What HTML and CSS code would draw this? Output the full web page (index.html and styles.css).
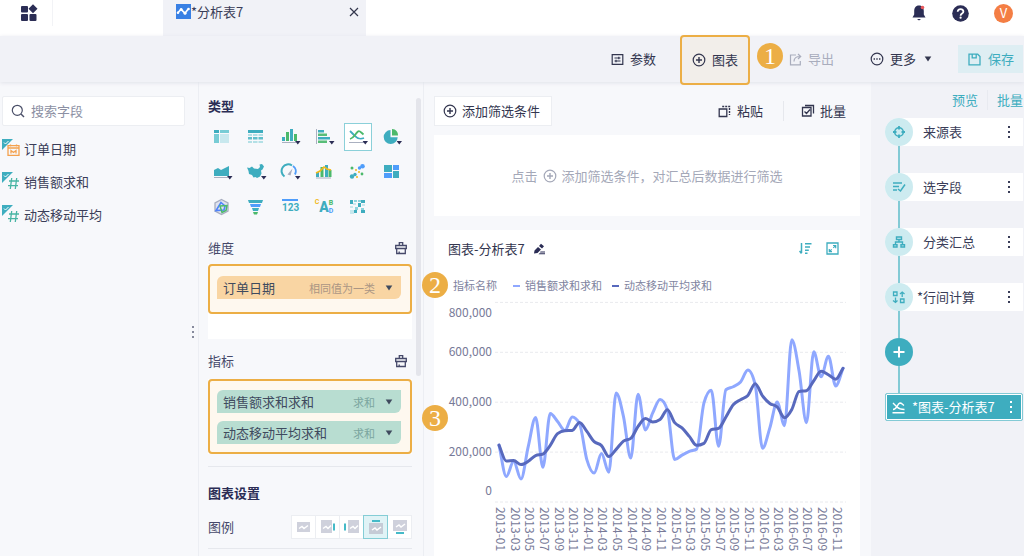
FILE: index.html
```html
<!DOCTYPE html>
<html lang="zh-CN">
<head>
<meta charset="utf-8">
<title>分析表7</title>
<link rel="stylesheet" href="styles.css">
</head>
<body>
<svg class="defs" aria-hidden="true">
  <symbol id="plus" viewBox="0 0 14 14"><circle cx="7" cy="7" r="5.8" fill="none" stroke="currentColor" stroke-width="1.2"/><path d="M7 4v6M4 7h6" stroke="currentColor" stroke-width="1.4"/></symbol>
  <symbol id="brush" viewBox="0 0 14 14"><path d="M5.300 4.500V1.700h3.400v2.800M1.700 7.500v-3h10.600v3M1 7.500h12M2.700 8v4.500h8.600V8M5.200 12.500V10.500" fill="none" stroke="currentColor" stroke-width="1.3"/></symbol>
  <symbol id="dots" viewBox="0 0 4 16"><path d="M1 2h2v2H1zM1 7h2v2H1zM1 12h2v2H1z" fill="currentColor"/></symbol>
  <symbol id="caret" viewBox="0 0 8 6"><path d="M.7.500h6.600L4 5.500z" fill="currentColor"/></symbol>
  <symbol id="hash" viewBox="0 0 18 18"><path d="M0 0h11L0 11z" fill="#3eadbf"/><path d="M2 3.500l1.500 1.500L6.500 2" fill="none" stroke="#fff"/><path d="M9.700 6L8.300 17M14.700 6l-1.400 11M7 9h10M6 13.700h10" stroke="#48b5a4" stroke-width="1.300" fill="none"/></symbol>
  <symbol id="tri" viewBox="0 0 6 4"><path d="M0 0h5.500L2.800 3.500z" fill="#2b2d55"/></symbol>
</svg>

<header class="topbar">
  <button class="apps" aria-label="应用"><svg width="18" height="18" viewBox="0 0 18 18" fill="#2b2d55"><rect x="1" y="2" width="7" height="6.500" rx="1"/><path d="M13 .3l4.500 4.500L13 9.300 8.500 4.800z"/><rect x="1" y="10" width="7" height="7" rx="1"/><rect x="9.500" y="10" width="7" height="7" rx="1"/></svg></button>
  <div class="tab">
    <svg width="15" height="15" viewBox="0 0 15 15"><path fill="#3880e4" d="M0 0h15v15H0z"/><path d="M2 8.500L5 5.500l4 3.700 3-4" fill="none" stroke="#fff" stroke-width="1.700"/><g fill="#fff"><circle cx="2" cy="8.700" r="1.300"/><circle cx="5.200" cy="5.500" r="1.500"/><circle cx="9" cy="9.200" r="1.500"/><circle cx="12.500" cy="5" r="1.300"/></g></svg>
    <span>*分析表7</span>
    <button class="close" aria-label="关闭"><svg width="10" height="10" viewBox="0 0 10 10"><path d="M1 1l8 8M9 1L1 9" stroke="#33374d" stroke-width="1.200"/></svg></button>
  </div>
  <nav class="account">
    <button aria-label="通知"><svg width="16" height="18" viewBox="0 0 16 18"><path d="M8 1.500c-3.500 0-4.800 2.500-4.800 5.500v3.500L1.500 13.500h13l-1.700-3V7c0-3-1.300-5.500-4.800-5.500zM6 15h4l-2 1.500z" fill="#2b2d55"/><circle cx="11.500" cy="3.500" r="1.800" fill="#e8595c"/></svg></button>
    <button aria-label="帮助"><svg width="17" height="17" viewBox="0 0 17 17"><circle cx="8.500" cy="8.500" r="8.300" fill="#2b2d55"/><path d="M5.700 6.700c0-3.600 5.700-3.400 5.700 0 0 1.900-2.800 1.900-2.800 4" fill="none" stroke="#fff" stroke-width="1.800"/><circle cx="8.600" cy="12.700" r="1.100" fill="#fff"/></svg></button>
    <button class="avatar">V</button>
  </nav>
</header>

<div class="toolbar">
  <button class="tool"><svg width="13" height="13" viewBox="0 0 13 13"><path d="M1.200 1.700h10.600v9.600H1.200zM3.500 5h6M3.500 8h6M7.800 3.700v2.600M5 6.700v2.600" fill="none" stroke="currentColor" stroke-width="1.200"/></svg>参数</button>
  <button class="tool tool-chart"><svg width="14" height="14"><use href="#plus"/></svg>图表<span class="step step-1">1</span></button>
  <button class="tool tool-export" disabled><svg width="13" height="13" viewBox="0 0 13 13"><path d="M7 2H1.500v9.800h9.800V8M5 8.500C5 5 7 3.500 11 3.500M9 1l2.700 2.500L9 6" fill="none" stroke="currentColor" stroke-width="1.200"/></svg>导出</button>
  <button class="tool tool-more"><svg width="14" height="14" viewBox="0 0 14 14"><circle cx="7" cy="7" r="5.800" fill="none" stroke="currentColor" stroke-width="1.200"/><path d="M3.600 6.300H5v1.400H3.600zM6.300 6.300h1.400v1.400H6.300zM9 6.300h1.400v1.400H9z" fill="currentColor"/></svg>更多<svg width="8" height="6"><use href="#caret"/></svg></button>
  <button class="tool save"><svg width="13" height="13" viewBox="0 0 13 13"><path d="M1 1.200h8.700L12 3.500v8.300H1zM4.200 1.500v3.300h4V1.500" fill="none" stroke="currentColor" stroke-width="1.300"/></svg>保存</button>
</div>

<main class="workspace">
  <aside class="fields">
    <label class="search"><svg width="14" height="14" viewBox="0 0 14 14"><circle cx="6.300" cy="6.300" r="5" fill="none" stroke="#4a4f68" stroke-width="1.200"/><path d="M10 10l3 3" stroke="#4a4f68" stroke-width="1.400"/></svg><input type="text" placeholder="搜索字段" aria-label="搜索字段"></label>
    <ul class="field-list">
      <li><svg width="18" height="18" viewBox="0 0 18 18"><path d="M0 0h11L0 11z" fill="#3eadbf"/><path d="M2 3.500l1.500 1.500L6.500 2" fill="none" stroke="#fff"/><path d="M6 6.700h11v9.600H6zM6 9h11M8.500 5.500v2M14.500 5.500v2M9 14.500v-3l2.500 2 2.500-2v3" fill="none" stroke="#f4a14e" stroke-width="1.300"/></svg>订单日期</li>
      <li><svg width="18" height="18"><use href="#hash"/></svg>销售额求和</li>
      <li><svg width="18" height="18"><use href="#hash"/></svg>动态移动平均</li>
    </ul>
    <div class="handle"><svg width="4" height="16"><use href="#dots"/></svg></div>
  </aside>

  <section class="config">
    <h2>类型</h2>
    <div class="types">
      <button aria-label="分组表"><svg viewBox="0 0 22 18"><path d="M3 2h5v3H3z" fill="#3eadbf"/><path d="M9 2h9v3H9zM3 6h5v9H3z" fill="#78ccd5"/><path d="M9 6h9v9H9z" fill="#c8e8ee"/></svg></button>
      <button aria-label="明细表"><svg viewBox="0 0 22 18"><path d="M3 2h15v3H3z" fill="#3eadbf"/><path d="M3 6h15v2H3zM3 13h15v2H3z" fill="#b3e0e6"/><path d="M3 9h15v2.500H3z" fill="#62bfcb"/><path d="M7.500 5v10M13 5v10" stroke="#f7f8fb"/></svg></button>
      <button aria-label="柱形图"><svg viewBox="0 0 22 18"><path d="M3 9h3v4H3zM11 1h3v12h-3z" fill="#3eadbf"/><path d="M7 4h3v9H7zM15 6h3v7h-3z" fill="#4cb96b"/><path d="M3 14.500h14" stroke="#aab0c0"/><use href="#tri" x="16" y="13" width="6" height="4"/></svg></button>
      <button aria-label="条形图"><svg viewBox="0 0 22 18"><path d="M3.500 1v15" stroke="#aab0c0"/><path d="M5 2h6v2.500H5zM5 9h12v2.500H5z" fill="#3eadbf"/><path d="M5 5.500h9V8H5zM5 12.500h9V15H5z" fill="#58bd78"/><use href="#tri" x="16" y="13" width="6" height="4"/></svg></button>
      <button class="selected" aria-label="线形图"><svg viewBox="0 0 22 18"><path d="M3 3l5 5c3 3 5 3.500 9 2" fill="none" stroke="#3eadbf" stroke-width="1.800"/><path d="M3 11c4-1 5-5 8-7.500 1.500-1.200 2 0 5.500 3" fill="none" stroke="#4cb96b" stroke-width="1.800"/><path d="M2 14.500h15" stroke="#aab0c0"/><use href="#tri" x="15.500" y="13" width="6" height="4"/></svg></button>
      <button aria-label="饼图"><svg viewBox="0 0 22 18"><path d="M9.500 2v7.200h7.200A7 7 0 1 1 9.500 2z" fill="#3eadbf"/><path d="M11 1c4 0 6 3 6 6.500h-6z" fill="#4cb96b"/><use href="#tri" x="15.500" y="13" width="6" height="4"/></svg></button>
      <button aria-label="面积图"><svg viewBox="0 0 22 18"><path d="M3 7l4-2 3 2 8-4v10H3z" fill="#3eadbf"/><path d="M3 14.500h14" stroke="#aab0c0"/><use href="#tri" x="16" y="13" width="6" height="4"/></svg></button>
      <button aria-label="地图"><svg viewBox="0 0 22 18"><path d="M2 4.500l2.500.5L7 3.500l2 2 4 .5 2-2-.5-2.500L17 1l2 2.500-1.500 3-1.500 1 .5 3-1.500 3-3 1.500-1.500-1-2 .5L7 12l-3-1-.5-3z" fill="#3eadbf"/><use href="#tri" x="16" y="13" width="6" height="4"/></svg></button>
      <button aria-label="仪表盘"><svg viewBox="0 0 22 18"><path d="M5.500 13.500A6.500 6.500 0 0 1 13 2.500" fill="none" stroke="#3eadbf" stroke-width="2"/><path d="M14 3a6.500 6.500 0 0 1 2 8.500" fill="none" stroke="#4f9dfb" stroke-width="2"/><path d="M8.500 11.500l5-6-2 7z" fill="#a7adbf"/><use href="#tri" x="16" y="13" width="6" height="4"/></svg></button>
      <button aria-label="组合图"><svg viewBox="0 0 22 18"><path d="M3 9h3v5H3zM12 2h3v12h-3z" fill="#3eadbf"/><path d="M7.500 4h3v10h-3zM15.500 7h3v7h-3z" fill="#4cb96b"/><path d="M3 10l4-2 4-4 3 2 4 1" fill="none" stroke="#f1b91c" stroke-width="1.600"/><path d="M3 15h15" stroke="#aab0c0"/></svg></button>
      <button aria-label="散点图"><svg viewBox="0 0 22 18"><g fill="#3eadbf"><circle cx="5" cy="13.500" r="2.200"/><circle cx="8" cy="11.500" r="1.700"/></g><g fill="#4f9dfb"><circle cx="15.500" cy="3.200" r="2.300"/><circle cx="12.500" cy="5" r="1.700"/></g><g fill="#4cb96b"><circle cx="5" cy="5" r="1.500"/><circle cx="15" cy="11" r="1.400"/></g><g fill="#f1b91c"><circle cx="9" cy="7" r="1"/><circle cx="12" cy="9" r="1"/><circle cx="10" cy="14" r="1"/></g></svg></button>
      <button aria-label="矩形树图"><svg viewBox="0 0 22 18"><path d="M3 2h8v7H3zM12 8h6v7h-6z" fill="#3eadbf"/><path d="M12 2h6v5h-6zM3 10h8v5H3z" fill="#4f9dfb"/></svg></button>
      <button aria-label="雷达图"><svg viewBox="0 0 22 18"><path d="M10.500 1.500L17 5v8l-6.500 3.500L4 13V5z" fill="#dfe3ef" stroke="#a7adbf" stroke-width="1.300"/><path d="M10 4.500l4 3.500-1 4-8 .5z" fill="none" stroke="#4f83fb" stroke-width="1.600"/><path d="M9 8l7-.500-1 5-4 2z" fill="none" stroke="#4cb96b" stroke-width="1.500"/></svg></button>
      <button aria-label="漏斗图"><svg viewBox="0 0 22 18"><path d="M3 2h15l-1 3H4z" fill="#3eadbf"/><path d="M5 6h11l-1 3H6z" fill="#4f9dfb"/><path d="M7 10h7l-1 3H8z" fill="#3eadbf"/><path d="M8 14h5l-1 2.500H9z" fill="#4cb96b"/></svg></button>
      <button class="type-number" aria-label="指标卡"><span>123</span></button>
      <button class="type-words" aria-label="词云"><i>C</i><b>A</b><span><em>B</em><u>D</u></span></button>
      <button aria-label="热力图"><svg viewBox="0 0 22 18"><path d="M3 2h3v4H3zM14 2h4v3h-4zM11 5h3v4h-3zM14 12h4v3h-4zM7 12h3v3H7z" fill="#3eadbf"/><path d="M7 2h3v2H7zM11 2h3v2h-3zM8 9h3v3H8zM14 10h3v2h-3z" fill="#8dd3dc"/><path d="M3 12h4v4H3zM6 5h3v2H6zM3 8h3v2H3zM15 6h3v2h-3z" fill="#c8e8ee"/></svg></button>
    </div>

    <div class="row"><h3>维度</h3><button aria-label="清空维度"><svg width="14" height="14"><use href="#brush"/></svg></button></div>
    <div class="well">
      <div class="frame">
        <button class="pill orange"><span>订单日期</span><small>相同值为一类</small><svg width="8" height="6"><use href="#caret"/></svg></button>
      </div>
      <span class="step step-2">2</span>
    </div>
    <div class="row"><h3>指标</h3><button aria-label="清空指标"><svg width="14" height="14"><use href="#brush"/></svg></button></div>
    <div class="well well-metrics">
      <div class="frame">
        <button class="pill"><span>销售额求和求和</span><small>求和</small><svg width="8" height="6"><use href="#caret"/></svg></button>
        <button class="pill"><span>动态移动平均求和</span><small>求和</small><svg width="8" height="6"><use href="#caret"/></svg></button>
      </div>
      <span class="step step-3">3</span>
    </div>
    <div class="settings">
      <h2>图表设置</h2>
      <div class="row legend-row"><h3>图例</h3>
        <div class="segments">
          <button aria-label="无图例"><svg viewBox="0 0 20 18"><path d="M3 4h13v10H3z" fill="#cfd1dc"/><path d="M5 10.500l3-2 2 2 4-3" fill="none" stroke="#fff" stroke-width="1.500"/></svg></button>
          <button aria-label="右侧"><svg viewBox="0 0 20 18"><path d="M3 2h11v13H3z" fill="#cfd1dc"/><path d="M5 10.500l3-2 2 2 3-3" fill="none" stroke="#fff" stroke-width="1.500"/><path d="M16 5.500v7" stroke="#45bac8" stroke-width="2"/></svg></button>
          <button aria-label="左侧"><svg viewBox="0 0 20 18"><path d="M6 2h11v13H6z" fill="#cfd1dc"/><path d="M8 10.500l3-2 2 2 3-3" fill="none" stroke="#fff" stroke-width="1.500"/><path d="M3 5.500v7" stroke="#45bac8" stroke-width="2"/></svg></button>
          <button class="on" aria-label="上方"><svg viewBox="0 0 20 18"><path d="M3 5h14v11H3z" fill="#c5cbd6"/><path d="M6 12l3-2 2 2 4-3" fill="none" stroke="#fff" stroke-width="1.500"/><path d="M6 3h8" stroke="#45bac8" stroke-width="2"/></svg></button>
          <button aria-label="下方"><svg viewBox="0 0 20 18"><path d="M3 2h14v11H3z" fill="#cfd1dc"/><path d="M6 9l3-2 2 2 4-3" fill="none" stroke="#fff" stroke-width="1.500"/><path d="M6 15h8" stroke="#45bac8" stroke-width="2"/></svg></button>
        </div>
      </div>
    </div>
    <span class="scrollbar"></span>
  </section>

  <section class="canvas">
    <div class="actions">
      <button class="add"><svg width="14" height="14"><use href="#plus"/></svg>添加筛选条件</button>
      <button class="tool paste"><svg width="13" height="13" viewBox="0 0 13 13"><path d="M1.200 4h7.600v7.500H1.200z" fill="none" stroke="currentColor" stroke-width="1.300"/><path d="M4.200 1.500h8M11.500 3v7" fill="none" stroke="currentColor" stroke-width="1.400" stroke-dasharray="2 1"/></svg>粘贴</button>
      <button class="tool batch"><svg width="14" height="14" viewBox="0 0 14 14"><path d="M1.500 3.500h8.500v8.500H1.500zM4 1.500h8.500V9.500M3.500 7.500l2 2 3.500-4" fill="none" stroke="currentColor" stroke-width="1.300"/></svg>批量</button>
    </div>
    <div class="card empty">点击<svg width="14" height="14"><use href="#plus"/></svg>添加筛选条件，对汇总后数据进行筛选</div>
    <article class="card chart">
      <header>
        <h2>图表-分析表7</h2>
        <button aria-label="重命名"><svg width="12" height="13" viewBox="0 0 12 13"><path d="M1 11.500l.5-3L5 5l3 2.500-3.500 3.500zM6 4l2-2.300L11 4.200 9 6.500zM7.500 9.500H12v1H7zM6.500 11.300H12v1H5.500z" fill="#2b2d55"/></svg></button>
        <button class="sort" aria-label="排序"><svg width="13" height="13" viewBox="0 0 13 13"><path d="M2.500 1v10M.5 9l2 2.500M6 1.700h6.500M6 5h5M6 8.200h3.800M6 11.300h2.500" fill="none" stroke="#3eadbf" stroke-width="1.500"/></svg></button>
        <button aria-label="放大"><svg width="13" height="13" viewBox="0 0 13 13"><path d="M1 1h11v11H1z" fill="none" stroke="#3eadbf" stroke-width="1.300"/><path d="M7 3.500h2.700v2.700M9.500 3.700L7.300 5.900M3.300 7v2.700H6M3.500 9.500l2.200-2.200" fill="none" stroke="#3eadbf" stroke-width="1.200"/></svg></button>
      </header>
      <div class="legend"><span>指标名称</span><span class="key light">销售额求和求和</span><span class="key dark">动态移动平均求和</span></div>
      <svg id="plot" viewBox="0 0 426 256" role="img" aria-label="图表-分析表7"></svg>
    </article>
  </section>

  <aside class="flow">
    <div class="flow-actions"><button>预览</button><button>批量</button></div>
    <ol>
      <li><div class="node"><span class="dot"><svg width="14" height="14" viewBox="0 0 14 14"><circle cx="7" cy="7" r="4.300" fill="none" stroke="#3eadbf" stroke-width="1.600"/><path d="M7 1v3.500M7 9.500V13M1 7h3.500M9.500 7H13" stroke="#3eadbf" stroke-width="1.800"/></svg></span><span class="name">来源表</span><button aria-label="菜单"><svg width="4" height="16"><use href="#dots"/></svg></button></div></li>
      <li><div class="node"><span class="dot"><svg width="14" height="14" viewBox="0 0 14 14"><path d="M1 3h9M1 6.500h6M1 10h4M6 9l2.500 2L13 4.500" fill="none" stroke="#3eadbf" stroke-width="1.500"/></svg></span><span class="name">选字段</span><button aria-label="菜单"><svg width="4" height="16"><use href="#dots"/></svg></button></div></li>
      <li><div class="node"><span class="dot"><svg width="14" height="14" viewBox="0 0 14 14"><path d="M4.500 2h5v2.500h-5zM7 4.500V7M3.500 9.500V7h7v2.500M1.500 9.700H5V12H1.500zM9 9.700h3.500V12H9z" fill="none" stroke="#3eadbf" stroke-width="1.400"/></svg></span><span class="name">分类汇总</span><button aria-label="菜单"><svg width="4" height="16"><use href="#dots"/></svg></button></div></li>
      <li><div class="node"><span class="dot"><svg width="14" height="14" viewBox="0 0 14 14"><path d="M1.500 2H5v3.500H1.500zM8.500 9H12v3.500H8.500zM10.200 7V2M8 4l2.200-2L12.500 4M3.500 7.500v5M1 10.500l2.500 2 2-2" fill="none" stroke="#3eadbf" stroke-width="1.300"/></svg></span><span class="name starred">*行间计算</span><button aria-label="菜单"><svg width="4" height="16"><use href="#dots"/></svg></button></div></li>
      <li><button class="add-node" aria-label="添加步骤"><svg width="14" height="14" viewBox="0 0 14 14"><path d="M7 1.500v11M1.500 7h11" stroke="#fff" stroke-width="2"/></svg></button></li>
      <li><div class="node current"><svg width="13" height="13" viewBox="0 0 13 13"><path d="M1 2l4 4c2 2 4 2.500 7.500 2.500M1 8.500c4 0 4-5.500 7-6.500 1.500 0 2 1 4 2.500M.5 11.700h12" fill="none" stroke="#fff" stroke-width="1.400"/></svg><span class="name">*图表-分析表7</span><button aria-label="菜单"><svg width="4" height="16"><use href="#dots"/></svg></button></div></li>
    </ol>
  </aside>
</main>
<script src="chart.js"></script>
</body>
</html>
```
FILE: styles.css
```css
* { box-sizing: border-box; }
body, h2, h3, ul, ol { margin: 0; padding: 0; }
ul, ol { list-style: none; }
body {
  height: 100vh;
  display: flex;
  flex-direction: column;
  overflow: hidden;
  background: #f7f8fb;
  color: #3a3d58;
  font: 13px/20px "Noto Sans CJK SC", sans-serif;
}
button {
  display: flex;
  align-items: center;
  padding: 0;
  border: 0;
  background: none;
  color: inherit;
  font: inherit;
  cursor: pointer;
}
svg { display: block; flex: none; }
.defs { position: absolute; width: 0; height: 0; }
h2, h3 { font-size: 13px; }
h3 { font-weight: 400; }

.topbar { display: flex; flex: none; height: 36px; background: #fff; }
.apps { width: 53px; height: 26px; padding-left: 20px; border-right: 1px solid #f2f3f6; }
.tab {
  display: flex;
  align-items: center;
  width: 203px;
  margin-left: 110px;
  padding: 0 7px 13px 13px;
  background: #f1f2f7;
}
.close { margin-left: auto; }
.account { display: flex; align-items: center; gap: 25px; height: 26px; margin-left: auto; padding-right: 11px; }
.account button { flex: none; }
.avatar {
  justify-content: center;
  width: 19px;
  height: 19px;
  border-radius: 50%;
  background: #f47e44;
  color: #fff;
}

.toolbar {
  display: flex;
  flex: none;
  justify-content: flex-end;
  align-items: center;
  height: 46px;
  padding-right: 1px;
  background: #f1f2f7;
  box-shadow: 0 1px 4px #e0e2ea;
  z-index: 1;
}
.tool { gap: 6px; color: #33364f; }
.tool-chart {
  position: relative;
  height: 50px;
  margin: 2px 39px 0 24px;
  padding: 0 10px;
  border: 2px solid #ecae45;
  border-radius: 4px;
  background: #f2eeea;
}
.tool-export { margin-right: 36px; color: #a9adbd; }
.tool-more { margin-right: 26px; }
.tool-more svg:last-child { margin-left: 2px; }
.save { height: 28px; padding: 0 9px 0 10px; gap: 7px; background: #deeef3; color: #3eadbf; }

.step {
  position: absolute;
  width: 26px;
  height: 26px;
  border-radius: 50%;
  background: #ecae45;
  color: #fff;
  font: 24px/26px "Liberation Serif", serif;
  text-align: center;
  z-index: 2;
}
.step-1 { left: 75px; top: 6px; }
.step-2 { left: 214px; top: 8px; }
.step-3 { left: 214px; top: 26px; }

.workspace { display: flex; flex: 1; min-height: 0; }
.fields { position: relative; flex: none; width: 199px; padding: 14px 13px 0 2px; border-right: 1px solid #eceef3; }
.search {
  display: flex;
  align-items: center;
  height: 30px;
  padding: 0 8px;
  gap: 6px;
  border: 1px solid #eceef2;
  border-radius: 2px;
  background: #fff;
}
.search input { width: 100%; border: 0; outline: 0; padding: 0; background: none; font: inherit; }
.search input::placeholder { color: #8c90a3; }
.field-list { margin-top: 6px; }
.field-list li { display: flex; align-items: center; height: 33px; gap: 4px; }
.field-list svg { margin-top: -2px; }
.handle { position: absolute; right: 3px; top: 242px; color: #868a9c; }

.config { position: relative; flex: none; width: 225px; padding: 14px 11px 0 9px; border-right: 1px solid #eceef3; color: #46496a; }
.config h2 { color: #2b2d55; }
.types { display: grid; grid-template-columns: repeat(6, 28px); gap: 7px 6px; margin-top: 7px; }
.types button { justify-content: center; width: 28px; height: 28px; border: 1px solid transparent; }
.types svg { width: 22px; height: 18px; }
.types .selected { background: #fff; border-color: #8bd0d9; }
.type-number span { width: 16px; border-top: 2px solid #4f9dfb; color: #3eadbf; font: bold 10px/14px Roboto, sans-serif; text-align: center; }
.type-words { color: #3eadbf; font: bold 7px/8px Roboto, sans-serif; }
.type-words b { font-size: 14px; line-height: 20px; }
.type-words i { align-self: flex-start; padding-top: 4px; color: #f1b91c; font-style: normal; }
.type-words em { display: block; color: #4cb96b; font-style: normal; }
.type-words u { display: block; color: #4f9dfb; text-decoration: none; }
.row { display: flex; justify-content: space-between; align-items: center; height: 24px; padding-right: 4px; }
.types + .row { margin-top: 15px; }
.well { position: relative; height: 75px; margin: 4px 0 10px; background: #fff; }
.well-metrics { margin-top: 6px; }
.frame { display: grid; gap: 8px; padding: 10px 9px 13px 7px; border: 2px solid #ecae45; border-radius: 4px; background: #fef8ef; }
.well-metrics .frame { padding-top: 9px; padding-bottom: 8px; }
.pill {
  height: 23px;
  padding: 0 8px 0 6px;
  border-radius: 6px 0;
  background: #b8ddd1;
  color: #3f4a5e;
}
.pill.orange { background: #f9d5a3; }
.pill small { margin-left: auto; margin-right: 10px; font-size: 11px; color: #7ba59f; }
.pill.orange small { color: #ab9684; }
.settings { margin-top: 12px; padding: 16px 0 9px; border-top: 1px solid #e6e8ed; border-bottom: 1px solid #e6e8ed; }
.legend-row { margin-top: 12px; padding: 0; }
.segments { display: flex; }
.segments button { justify-content: center; width: 25px; height: 24px; margin-left: -1px; border: 1px solid #eceef2; background: #fff; }
.segments svg { width: 20px; height: 18px; }
.segments .on { z-index: 1; border-color: #84cdd6; background: #e0f3f6; }
.scrollbar { position: absolute; right: 2px; top: 16px; width: 5px; height: 278px; border-radius: 3px; background: #e4e5eb; }

.canvas { display: flex; flex-direction: column; flex: 1; min-width: 0; padding: 14px 11px 0 10px; }
.actions { display: flex; align-items: center; flex: none; height: 30px; }
.add { height: 30px; padding: 0 11px 0 8px; gap: 5px; border: 1px solid #eceef2; background: #fff; color: #33364f; }
.paste { margin-left: auto; padding-right: 20px; border-right: 1px solid #e6e8ed; }
.batch { padding: 0 14px 0 17px; gap: 5px; }
.card { background: #fff; }
.empty { display: flex; justify-content: center; align-items: center; flex: none; height: 81px; margin: 9px 0 14px; gap: 5px; color: #a4a8b8; }
.chart { flex: 1; min-height: 0; overflow: hidden; }
.chart header { display: flex; align-items: center; height: 37px; padding: 0 21px 0 14px; gap: 8px; }
.chart h2 { color: #33364f; font-weight: 400; }
.sort { margin-left: auto; margin-right: 6px; }
.legend { display: flex; height: 33px; padding: 8px 19px; font-size: 11px; color: #8083a0; }
.key::before { content: ""; display: inline-block; width: 7px; height: 2px; margin: 0 5px 3px 0; background: #8fa8ff; }
.light { margin-left: 16px; }
.dark { margin-left: 10px; }
.key.dark::before { background: #5869bd; }
#plot { width: 100%; font-size: 12px; fill: #777a98; }
.grid { stroke: #e9eaee; stroke-dasharray: 3 2; }
.series { fill: none; stroke-width: 3; stroke-linecap: round; stroke-linejoin: round; }

.flow { flex: none; width: 153px; padding: 8px 1px 0 14px; background: #f1f2f7; }
.flow-actions { display: flex; justify-content: flex-end; color: #3eadbf; }
.flow-actions button + button { margin-left: 9px; padding-left: 9px; border-left: 1px solid #e8eaf0; }
.flow ol { margin-top: 8px; }
.flow li + li::before { content: ""; display: block; width: 2px; height: 27px; margin-left: 13px; background: #83cad5; }
.node { display: flex; align-items: center; height: 28px; padding-right: 12px; border-radius: 14px 0 0 14px; background: #fff; }
.dot { display: flex; justify-content: center; align-items: center; width: 28px; height: 28px; border-radius: 50%; background: #cdebf0; }
.name { margin-left: 10px; }
.starred { margin-left: 4px; }
.node button { margin-left: auto; }
.add-node { justify-content: center; width: 28px; height: 28px; border-radius: 50%; background: #3eadbf; }
.current { padding: 0 9px 0 6px; border: 1px solid #83cad5; border-radius: 2px; background: #3eadbf; box-shadow: inset 0 0 0 1px #fff; color: #fff; }
.current .name { margin-left: 7px; }
```
FILE: chart.js
```js
const sales = [228,102,163,92,223,339,139,355,323,287,341,314,170,116,194,119,437,343,176,432,289,357,411,370,170,188,203,212,397,448,223,450,462,481,529,470,215,297,401,306,650,524,318,602,502,584,465,536];
const average = [228,164,166,150,163,186,192,227,274,286,287,319,283,242,226,182,211,244,255,303,335,321,331,370,318,297,263,227,235,290,295,341,390,410,427,474,425,395,381,338,371,443,446,486,524,510,492,536];
const left = 65, step = 7.32, base = 202;
const y = v => base - v * 0.2495;

// Monotone cubic interpolation, so peaks never overshoot the data.
function curve(values) {
  const p = values.map((v, i) => [left + i * step, y(v)]);
  const slope = i => (p[i + 1][1] - p[i][1]) / step;
  const tangent = p.map((_, i) => {
    if (i === 0) return slope(0);
    if (i === p.length - 1) return slope(i - 1);
    const a = slope(i - 1), b = slope(i);
    return a * b <= 0 ? 0 : Math.sign(a) * Math.min(2 * Math.abs(a), 2 * Math.abs(b), Math.abs(a + b) / 2);
  });
  let d = `M${p[0]}`;
  for (let i = 1; i < p.length; i++) {
    const h = step / 3;
    d += `C${p[i - 1][0] + h},${p[i - 1][1] + tangent[i - 1] * h} ${p[i][0] - h},${p[i][1] - tangent[i] * h} ${p[i]}`;
  }
  return d;
}

let out = '';
for (const v of [0, 200, 400, 600, 800]) {
  out += `<line class="grid" x1="61" x2="412" y1="${y(v)}" y2="${y(v)}"/>`;
}
[['800,000', 17], ['600,000', 56], ['400,000', 106], ['200,000', 156], ['0', 195]].forEach(([t, ty]) => {
  out += `<text x="58" y="${ty}" text-anchor="end">${t}</text>`;
});
for (let i = 0; i < 48; i += 2) {
  const label = `${2013 + Math.floor(i / 12)}-${String(i % 12 + 1).padStart(2, '0')}`;
  out += `<text transform="translate(${left + i * step - 3} 207) rotate(90)">${label}</text>`;
}
out += `<path class="series" stroke="#8fa8ff" d="${curve(sales)}"/>`;
out += `<path class="series" stroke="#5869bd" d="${curve(average)}"/>`;
document.getElementById('plot').innerHTML = out;
```
